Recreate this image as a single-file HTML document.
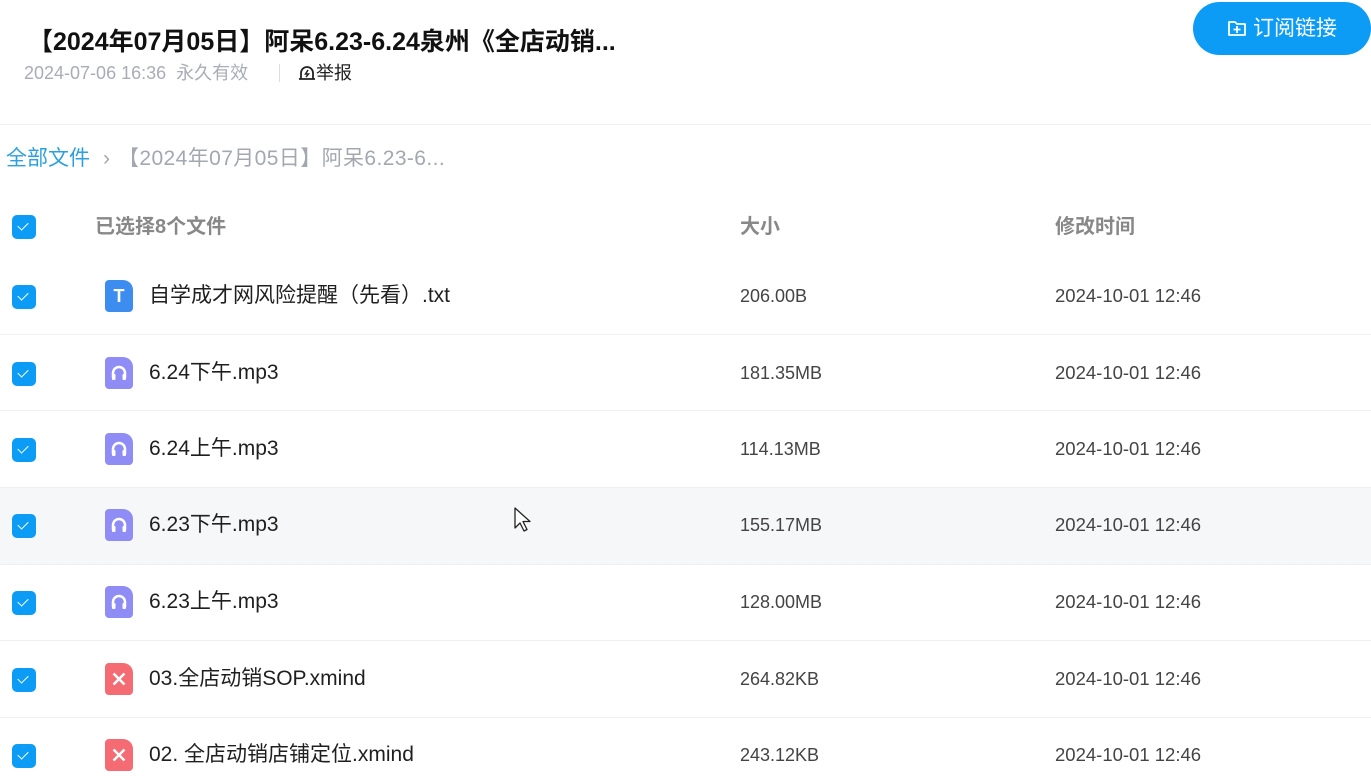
<!DOCTYPE html>
<html><head><meta charset="utf-8"><style>
*{margin:0;padding:0;box-sizing:border-box}
body{width:1371px;height:769px;overflow:hidden;background:#fff;font-family:"Liberation Sans","Noto Sans CJK SC",sans-serif;position:relative}
.a{position:absolute;white-space:nowrap;line-height:1.2}
.cb{position:absolute;left:12px;width:24px;height:24px;border-radius:5px;background:#0d9cf5}
.cb:after{content:"";position:absolute;left:8px;top:5px;width:5px;height:9px;border:solid #fff;border-width:0 1.5px 1.5px 0;transform:rotate(45deg)}
.row{position:absolute;left:0;width:1371px;height:77px}
.sep{position:absolute;left:0;width:1371px;height:1px;background:#eef0f2}
.ic{position:absolute;left:105px;width:28px;height:32px;border-radius:4px 10px 4px 4px;color:#fff;text-align:center}
.nm{position:absolute;left:149px;font-size:21px;color:#1f1f1f;line-height:24px;white-space:nowrap}
.sz{position:absolute;left:740px;font-size:18px;color:#444;line-height:22px}
.tm{position:absolute;left:1055px;font-size:18.5px;color:#444;line-height:22px}
</style></head><body>
<div class="a" style="left:28px;top:27px;font-size:25px;font-weight:bold;color:#111">【2024年07月05日】阿呆6.23-6.24泉州《全店动销...</div>
<div class="a" style="left:24px;top:63px;font-size:18px;color:#a8adb5">2024-07-06 16:36&nbsp;&nbsp;永久有效</div>
<div class="a" style="left:279px;top:64px;width:1px;height:18px;background:#ddd"></div>
<div class="a" style="left:298px;top:63px;font-size:18px;color:#222"><svg width="18" height="16" viewBox="0 0 18 16" style="vertical-align:-2px"><path d="M3 14V8a6 6 0 0 1 12 0v6z M1 14h16" fill="none" stroke="#222" stroke-width="1.8"/><path d="M10 5 7.5 9h3L8 12" fill="none" stroke="#222" stroke-width="1.5"/></svg>举报</div>
<div class="a" style="left:1193px;top:2px;width:178px;height:53px;border-radius:27px;background:#0d9cf5;color:#fff;font-size:21px;line-height:53px;padding-left:34px"><svg width="20" height="18" viewBox="0 0 20 18" style="vertical-align:-2px;margin-right:6px"><path d="M2 3h6l2 2h8v11H2z" fill="none" stroke="#fff" stroke-width="1.8" stroke-linejoin="round"/><path d="M10 7v7M6.5 10.5h7" stroke="#fff" stroke-width="1.8"/></svg>订阅链接</div>
<div class="sep" style="top:124px"></div>
<div class="a" style="left:6px;top:146px;font-size:21px;color:#2b9fe0">全部文件</div>
<div class="a" style="left:103px;top:146px;font-size:21px;color:#a3a8b0">›</div>
<div class="a" style="left:118px;top:146px;font-size:21px;color:#a3a8b0;letter-spacing:0.4px">【2024年07月05日】阿呆6.23-6...</div>
<div class="cb" style="top:215px"></div>
<div class="a" style="left:95px;top:215px;font-size:20px;font-weight:bold;color:#888">已选择8个文件</div>
<div class="a" style="left:740px;top:215px;font-size:20px;font-weight:bold;color:#888">大小</div>
<div class="a" style="left:1055px;top:215px;font-size:20px;font-weight:bold;color:#888">修改时间</div>

<div class="row" style="top:487px;background:#f6f7f8"></div>
<div class="sep" style="top:334px"></div><div class="sep" style="top:410px"></div><div class="sep" style="top:487px"></div><div class="sep" style="top:564px"></div><div class="sep" style="top:640px"></div><div class="sep" style="top:717px"></div>

<div class="cb" style="top:285px"></div><div class="ic" style="top:280px;background:#3d8df0;font-weight:bold;font-size:18px;line-height:32px">T</div>
<div class="nm" style="top:284px">自学成才网风险提醒（先看）.txt</div><div class="sz" style="top:285px">206.00B</div><div class="tm" style="top:285px">2024-10-01 12:46</div>

<div class="cb" style="top:362px"></div><div class="ic" style="top:357px;background:#8f8cf5"><svg width="28" height="32" viewBox="0 0 28 32"><path d="M8 21v-5a6 6 0 0 1 12 0v5" fill="none" stroke="#fff" stroke-width="2.5"/><rect x="7" y="17" width="3.5" height="6" rx="1" fill="#fff"/><rect x="17.5" y="17" width="3.5" height="6" rx="1" fill="#fff"/></svg></div>
<div class="nm" style="top:361px">6.24下午.mp3</div><div class="sz" style="top:362px">181.35MB</div><div class="tm" style="top:362px">2024-10-01 12:46</div>

<div class="cb" style="top:438px"></div><div class="ic" style="top:433px;background:#8f8cf5"><svg width="28" height="32" viewBox="0 0 28 32"><path d="M8 21v-5a6 6 0 0 1 12 0v5" fill="none" stroke="#fff" stroke-width="2.5"/><rect x="7" y="17" width="3.5" height="6" rx="1" fill="#fff"/><rect x="17.5" y="17" width="3.5" height="6" rx="1" fill="#fff"/></svg></div>
<div class="nm" style="top:437px">6.24上午.mp3</div><div class="sz" style="top:438px">114.13MB</div><div class="tm" style="top:438px">2024-10-01 12:46</div>

<div class="cb" style="top:514px"></div><div class="ic" style="top:509px;background:#8f8cf5"><svg width="28" height="32" viewBox="0 0 28 32"><path d="M8 21v-5a6 6 0 0 1 12 0v5" fill="none" stroke="#fff" stroke-width="2.5"/><rect x="7" y="17" width="3.5" height="6" rx="1" fill="#fff"/><rect x="17.5" y="17" width="3.5" height="6" rx="1" fill="#fff"/></svg></div>
<div class="nm" style="top:513px">6.23下午.mp3</div><div class="sz" style="top:514px">155.17MB</div><div class="tm" style="top:514px">2024-10-01 12:46</div>

<div class="cb" style="top:591px"></div><div class="ic" style="top:586px;background:#8f8cf5"><svg width="28" height="32" viewBox="0 0 28 32"><path d="M8 21v-5a6 6 0 0 1 12 0v5" fill="none" stroke="#fff" stroke-width="2.5"/><rect x="7" y="17" width="3.5" height="6" rx="1" fill="#fff"/><rect x="17.5" y="17" width="3.5" height="6" rx="1" fill="#fff"/></svg></div>
<div class="nm" style="top:590px">6.23上午.mp3</div><div class="sz" style="top:591px">128.00MB</div><div class="tm" style="top:591px">2024-10-01 12:46</div>

<div class="cb" style="top:668px"></div><div class="ic" style="top:663px;background:#f56b74"><svg width="28" height="32" viewBox="0 0 28 32"><path d="M8.5 10.5l11 11M19.5 10.5l-11 11" stroke="#fff" stroke-width="2.5"/></svg></div>
<div class="nm" style="top:667px">03.全店动销SOP.xmind</div><div class="sz" style="top:668px">264.82KB</div><div class="tm" style="top:668px">2024-10-01 12:46</div>

<div class="cb" style="top:744px"></div><div class="ic" style="top:739px;background:#f56b74"><svg width="28" height="32" viewBox="0 0 28 32"><path d="M8.5 10.5l11 11M19.5 10.5l-11 11" stroke="#fff" stroke-width="2.5"/></svg></div>
<div class="nm" style="top:743px">02. 全店动销店铺定位.xmind</div><div class="sz" style="top:744px">243.12KB</div><div class="tm" style="top:744px">2024-10-01 12:46</div>

<svg class="a" style="left:513px;top:506px" width="20" height="28" viewBox="0 0 20 28"><path d="M2 2v20l5-5 4 8 3-1.5-4-8h7z" fill="#fff" stroke="#222" stroke-width="1.3" stroke-linejoin="round"/></svg>
</body></html>
